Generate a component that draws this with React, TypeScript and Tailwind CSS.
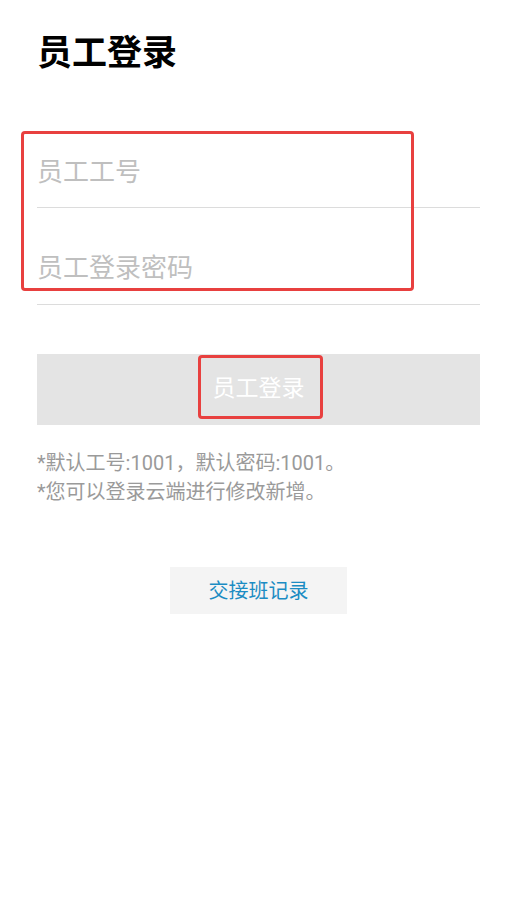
import React from "react";

export default function App() {
  return (
    <div
      className="relative min-h-[902px] w-[515px] bg-white pl-[37px] pr-[35px] pt-[36px] font-['Roboto','Noto_Sans_CJK_SC',sans-serif]"
    >
      <h1 className="text-[35px] font-bold leading-[35px] text-black">员工登录</h1>

      <div className="mt-[40px] flex flex-col">
        <div className="flex h-[97px] items-end border-b border-[#dcdcdc] pb-[20px]">
          <input
            className="w-full bg-transparent text-[26px] leading-[26px] text-[#333] outline-none placeholder:text-[#bfbfbf]"
            placeholder="员工工号"
          />
        </div>
        <div className="flex h-[97px] items-end border-b border-[#dcdcdc] pb-[21px]">
          <input
            type="password"
            className="w-full bg-transparent text-[26px] leading-[26px] text-[#333] outline-none placeholder:text-[#bfbfbf]"
            placeholder="员工登录密码"
          />
        </div>
      </div>

      <button className="mt-[49px] flex h-[71px] w-full items-center justify-center bg-[#e4e4e4] text-[23px] text-white">
        员工登录
      </button>

      <div className="mt-[24px] text-[20px] leading-[29px] text-[#9a9a9a]">
        <p>*默认工号:1001，默认密码:1001。</p>
        <p>*您可以登录云端进行修改新增。</p>
      </div>

      <div className="mt-[60px] flex justify-center">
        <button className="flex h-[47px] w-[177px] items-center justify-center bg-[#f4f4f4] text-[20px] text-[#1b8cc3]">
          交接班记录
        </button>
      </div>

      <div className="pointer-events-none absolute left-[21px] top-[131px] h-[160px] w-[393px] rounded-[4px] border-[3px] border-[#e8403f]" />
      <div className="pointer-events-none absolute left-[198px] top-[355px] h-[64px] w-[125px] rounded-[4px] border-[3px] border-[#e8403f]" />
    </div>
  );
}
